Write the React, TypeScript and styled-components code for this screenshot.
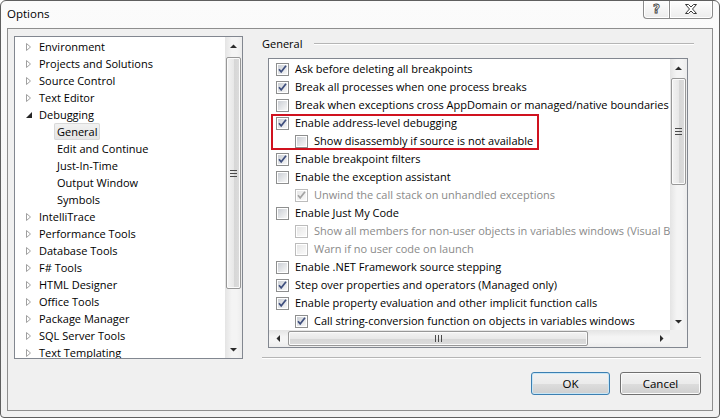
import React from 'react';
import styled, { createGlobalStyle } from 'styled-components';

const Global = createGlobalStyle`
  html, body { margin: 0; padding: 0; background: #ffffff; }
  body { font-family: "Open Sans", "Noto Sans CJK KR", sans-serif; font-size: 11px; color: #000; }
  * { box-sizing: border-box; }
`;

const Window = styled.div`
  width: 720px;
  height: 418px;
  border: 1px solid #5f5f5f;
  border-radius: 6px 6px 4px 4px;
  background: linear-gradient(#fbfbfb, #f1f1f1);
  display: flex;
  flex-direction: column;
  padding: 0 6px 6px 6px;
  overflow: hidden;
`;

const TitleBar = styled.div`
  height: 27px;
  display: flex;
  align-items: flex-start;
  justify-content: space-between;
`;

const Title = styled.span`
  margin-top: 5px;
  font-size: 11.5px;
  line-height: 16px;
  color: #000;
`;

const CaptionButtons = styled.div`
  display: flex;
  margin-top: -1px;
`;

const CaptionButton = styled.div<{ $wide?: boolean; $left?: boolean }>`
  width: ${p => (p.$wide ? 44 : 26)}px;
  height: 19px;
  border: 1px solid #8b8b8b;
  border-top: none;
  ${p => (p.$left ? 'border-right: none; border-radius: 0 0 0 4px;' : 'border-radius: 0 0 4px 0;')}
  background: linear-gradient(#ffffff, #ececec);
  box-shadow: inset 0 0 0 1px #ffffff;
  display: flex;
  align-items: center;
  justify-content: center;
`;

const HelpGlyph = styled.span`
  font-family: "DejaVu Sans", sans-serif;
  font-weight: bold;
  font-size: 12px;
  line-height: 12px;
  color: #fff;
  -webkit-text-stroke: 0.8px #3a3a3a;
`;

const Client = styled.div`
  flex: 1;
  border: 1px solid #8e8e8e;
  background: #f0f0f0;
  padding: 7px 11px 0 6px;
  display: flex;
  flex-direction: column;
`;

const TopArea = styled.div`
  display: flex;
  height: 323px;
`;

const TreeBox = styled.div`
  width: 229px;
  height: 323px;
  border: 1px solid #828790;
  background: #fff;
  display: flex;
`;

const TreeItems = styled.div`
  flex: 1;
  padding-top: 1px;
  overflow: hidden;
`;

const TreeRow = styled.div<{ $level: number }>`
  height: 17px;
  display: flex;
  align-items: center;
  padding-left: ${p => 11 + p.$level * 18}px;
  white-space: nowrap;
`;

const Expander = styled.span`
  width: 13px;
  display: flex;
  align-items: center;
`;

const TreeLabel = styled.span<{ $selected?: boolean }>`
  line-height: 17px;
  padding: 0 3px;
  margin-left: -3px;
  border-radius: 2px;
  ${p =>
    p.$selected
      ? 'background: linear-gradient(#f2f2f2, #e4e4e4); box-shadow: inset 0 0 0 1px #d9d9d9;'
      : ''}
`;

const VScroll = styled.div`
  width: 17px;
  display: flex;
  flex-direction: column;
  background: linear-gradient(to right, #e4e4e4, #f4f4f4 40%, #f4f4f4 70%, #ececec);
`;

const HScroll = styled.div`
  height: 17px;
  display: flex;
  background: linear-gradient(#e4e4e4, #f4f4f4 40%, #f4f4f4 70%, #ececec);
`;

const ArrowBox = styled.div`
  width: 17px;
  height: 17px;
  flex: none;
  display: flex;
  align-items: center;
  justify-content: center;
`;

const Track = styled.div<{ $horizontal?: boolean }>`
  flex: 1;
  display: flex;
  flex-direction: ${p => (p.$horizontal ? 'row' : 'column')};
`;

const Thumb = styled.div<{ $horizontal?: boolean }>`
  flex: none;
  ${p => (p.$horizontal ? 'margin: 1px 0; height: 15px;' : 'margin: 0 1px; width: 15px;')}
  border: 1px solid #979797;
  border-radius: 2px;
  background: ${p =>
    p.$horizontal
      ? 'linear-gradient(#f3f3f3, #e8e8e8 50%, #d6d6d6 51%, #dcdcdc)'
      : 'linear-gradient(to right, #f3f3f3, #e8e8e8 50%, #d6d6d6 51%, #dcdcdc)'};
  box-shadow: inset 0 0 0 1px #fbfbfb;
  display: flex;
  align-items: center;
  justify-content: center;
`;

const Corner = styled.div`
  width: 17px;
  height: 17px;
  background: #f0f0f0;
`;

const RightPane = styled.div`
  flex: 1;
  margin-left: 19px;
  display: flex;
  flex-direction: column;
`;

const GroupHeader = styled.div`
  height: 16px;
  display: flex;
  align-items: center;
`;

const GroupTitle = styled.span`
  line-height: 16px;
`;

const EtchedLine = styled.div`
  flex: 1;
  height: 2px;
  border-top: 1px solid #b5b5b5;
  border-bottom: 1px solid #ffffff;
`;

const HeaderRule = styled(EtchedLine)`
  margin: 0 7px 0 12px;
`;

const ListBox = styled.div`
  margin: 6px 0 0 6px;
  width: 420px;
  height: 290px;
  border: 1px solid #828790;
  background: #fff;
  display: grid;
  grid-template-columns: 1fr 17px;
  grid-template-rows: 1fr 17px;
`;

const ListItems = styled.div`
  padding-top: 1px;
  overflow: hidden;
`;

const CheckRow = styled.div<{ $indent: number; $shift?: number }>`
  height: 18px;
  display: flex;
  align-items: center;
  gap: 6px;
  padding-left: ${p => 7 + p.$indent * 19 - (p.$shift || 0)}px;
  white-space: nowrap;
`;

const CheckText = styled.span<{ $disabled?: boolean }>`
  color: ${p => (p.$disabled ? '#8a8a8a' : '#000')};
  line-height: 18px;
`;

const Highlight = styled.div`
  margin-left: 2px;
  width: 268px;
  outline: 2px solid #d0121f;
  outline-offset: -2px;
`;

const Separator = styled(EtchedLine)`
  flex: none;
  margin-top: 9px;
`;

const ButtonRow = styled.div`
  display: flex;
  justify-content: flex-end;
  gap: 10px;
  margin-top: 13px;
`;

const Button = styled.button<{ $default?: boolean; $w: number }>`
  width: ${p => p.$w}px;
  height: 23px;
  font-family: inherit;
  font-size: 11.5px;
  color: #000;
  border: 1px solid ${p => (p.$default ? '#3c7fb1' : '#707070')};
  border-radius: 3px;
  background: linear-gradient(#f2f2f2, #ebebeb 50%, #dddddd 51%, #cfcfcf);
  box-shadow: inset 0 0 0 1px ${p => (p.$default ? '#c8e6f6' : '#fbfbfb')};
  padding: 0;
`;

const Triangle = ({ open }: { open?: boolean }) =>
  open ? (
    <svg width="6" height="6" viewBox="0 0 6 6">
      <path d="M6 0 L6 6 L0 6 Z" fill="#262626" />
    </svg>
  ) : (
    <svg width="5" height="8" viewBox="0 0 5 8">
      <path d="M0.5 0.5 L4.5 4 L0.5 7.5 Z" fill="#fff" stroke="#a0a0a0" strokeWidth="1" />
    </svg>
  );

const Arrow = ({ dir }: { dir: 'up' | 'down' | 'left' | 'right' }) => {
  const d = {
    up: 'M0 4 L3.5 0.5 L7 4 Z',
    down: 'M0 0 L7 0 L3.5 3.5 Z',
    left: 'M4 0 L4 7 L0.5 3.5 Z',
    right: 'M0 0 L0 7 L3.5 3.5 Z',
  }[dir];
  const vertical = dir === 'up' || dir === 'down';
  return (
    <svg width={vertical ? 7 : 4} height={vertical ? 4 : 7} viewBox={vertical ? '0 0 7 4' : '0 0 4 7'}>
      <path d={d} fill="#2b2b2b" />
    </svg>
  );
};

const Grip = ({ horizontal }: { horizontal?: boolean }) =>
  horizontal ? (
    <svg width="7" height="7" viewBox="0 0 7 7">
      <path d="M0.5 0 V7 M3.5 0 V7 M6.5 0 V7" stroke="#4a4a4a" strokeWidth="1" />
    </svg>
  ) : (
    <svg width="7" height="7" viewBox="0 0 7 7">
      <path d="M0 0.5 H7 M0 3.5 H7 M0 6.5 H7" stroke="#4a4a4a" strokeWidth="1" />
    </svg>
  );

const CheckBox = ({ checked, disabled }: { checked?: boolean; disabled?: boolean }) => (
  <svg width="13" height="13" viewBox="0 0 13 13" style={{ flex: 'none' }}>
    <defs>
      <linearGradient id="cbg" x1="0" y1="0" x2="1" y2="1">
        <stop offset="0" stopColor="#cbcfd5" />
        <stop offset="1" stopColor="#f7f7f7" />
      </linearGradient>
      <linearGradient id="cbd" x1="0" y1="0" x2="1" y2="1">
        <stop offset="0" stopColor="#e6e6e6" />
        <stop offset="1" stopColor="#fafafa" />
      </linearGradient>
    </defs>
    <rect x="0.5" y="0.5" width="12" height="12" fill="#fff" stroke={disabled ? '#bcbcbc' : '#8e8f8f'} />
    <rect x="2" y="2" width="9" height="9" fill={disabled ? 'url(#cbd)' : 'url(#cbg)'} />
    {checked && (
      <path
        d="M3 6.2 L5.2 8.8 L10 2.8"
        fill="none"
        stroke={disabled ? '#a3a3a3' : '#3f4f7e'}
        strokeWidth="1.7"
      />
    )}
  </svg>
);

const CloseGlyph = () => (
  <svg width="12" height="10" viewBox="0 0 12 10">
    <path
      d="M0.5 0.5 H3.5 L6 3 L8.5 0.5 H11.5 L7.5 5 L11.5 9.5 H8.5 L6 7 L3.5 9.5 H0.5 L4.5 5 Z"
      fill="#fff"
      stroke="#3a3a3a"
      strokeWidth="1"
      strokeLinejoin="round"
    />
  </svg>
);

type TreeItem = { label: string; level: number; expander?: 'open' | 'closed'; selected?: boolean };

const treeItems: TreeItem[] = [
  { label: 'Environment', level: 0, expander: 'closed' },
  { label: 'Projects and Solutions', level: 0, expander: 'closed' },
  { label: 'Source Control', level: 0, expander: 'closed' },
  { label: 'Text Editor', level: 0, expander: 'closed' },
  { label: 'Debugging', level: 0, expander: 'open' },
  { label: 'General', level: 1, selected: true },
  { label: 'Edit and Continue', level: 1 },
  { label: 'Just-In-Time', level: 1 },
  { label: 'Output Window', level: 1 },
  { label: 'Symbols', level: 1 },
  { label: 'IntelliTrace', level: 0, expander: 'closed' },
  { label: 'Performance Tools', level: 0, expander: 'closed' },
  { label: 'Database Tools', level: 0, expander: 'closed' },
  { label: 'F# Tools', level: 0, expander: 'closed' },
  { label: 'HTML Designer', level: 0, expander: 'closed' },
  { label: 'Office Tools', level: 0, expander: 'closed' },
  { label: 'Package Manager', level: 0, expander: 'closed' },
  { label: 'SQL Server Tools', level: 0, expander: 'closed' },
  { label: 'Text Templating', level: 0, expander: 'closed' },
];

type Opt = { label: string; indent: number; checked?: boolean; disabled?: boolean };

const before: Opt[] = [
  { label: 'Ask before deleting all breakpoints', indent: 0, checked: true },
  { label: 'Break all processes when one process breaks', indent: 0, checked: true },
  { label: 'Break when exceptions cross AppDomain or managed/native boundaries', indent: 0 },
];

const highlighted: Opt[] = [
  { label: 'Enable address-level debugging', indent: 0, checked: true },
  { label: 'Show disassembly if source is not available', indent: 1 },
];

const after: Opt[] = [
  { label: 'Enable breakpoint filters', indent: 0, checked: true },
  { label: 'Enable the exception assistant', indent: 0 },
  { label: 'Unwind the call stack on unhandled exceptions', indent: 1, checked: true, disabled: true },
  { label: 'Enable Just My Code', indent: 0 },
  { label: 'Show all members for non-user objects in variables windows (Visual Basic only)', indent: 1, disabled: true },
  { label: 'Warn if no user code on launch', indent: 1, disabled: true },
  { label: 'Enable .NET Framework source stepping', indent: 0 },
  { label: 'Step over properties and operators (Managed only)', indent: 0, checked: true },
  { label: 'Enable property evaluation and other implicit function calls', indent: 0, checked: true },
  { label: 'Call string-conversion function on objects in variables windows', indent: 1, checked: true },
];

const OptRow = ({ o, shift }: { o: Opt; shift?: number }) => (
  <CheckRow $indent={o.indent} $shift={shift}>
    <CheckBox checked={o.checked} disabled={o.disabled} />
    <CheckText $disabled={o.disabled}>{o.label}</CheckText>
  </CheckRow>
);

export default function App() {
  return (
    <>
      <Global />
      <Window>
        <TitleBar>
          <Title>Options</Title>
          <CaptionButtons>
            <CaptionButton $left>
              <HelpGlyph>?</HelpGlyph>
            </CaptionButton>
            <CaptionButton $wide>
              <CloseGlyph />
            </CaptionButton>
          </CaptionButtons>
        </TitleBar>
        <Client>
          <TopArea>
            <TreeBox>
              <TreeItems>
                {treeItems.map(t => (
                  <TreeRow key={t.label} $level={t.level}>
                    <Expander>{t.expander && <Triangle open={t.expander === 'open'} />}</Expander>
                    <TreeLabel $selected={t.selected}>{t.label}</TreeLabel>
                  </TreeRow>
                ))}
              </TreeItems>
              <VScroll>
                <ArrowBox>
                  <Arrow dir="up" />
                </ArrowBox>
                <Track>
                  <Thumb style={{ marginTop: 3, height: 232 }}>
                    <Grip />
                  </Thumb>
                </Track>
                <ArrowBox>
                  <Arrow dir="down" />
                </ArrowBox>
              </VScroll>
            </TreeBox>
            <RightPane>
              <GroupHeader>
                <GroupTitle>General</GroupTitle>
                <HeaderRule />
              </GroupHeader>
              <ListBox>
                <ListItems>
                  {before.map(o => (
                    <OptRow key={o.label} o={o} />
                  ))}
                  <Highlight>
                    {highlighted.map(o => (
                      <OptRow key={o.label} o={o} shift={2} />
                    ))}
                  </Highlight>
                  {after.map(o => (
                    <OptRow key={o.label} o={o} />
                  ))}
                </ListItems>
                <VScroll>
                  <ArrowBox>
                    <Arrow dir="up" />
                  </ArrowBox>
                  <Track>
                    <Thumb style={{ marginTop: 2, height: 107 }}>
                      <Grip />
                    </Thumb>
                  </Track>
                  <ArrowBox>
                    <Arrow dir="down" />
                  </ArrowBox>
                </VScroll>
                <HScroll>
                  <ArrowBox>
                    <Arrow dir="left" />
                  </ArrowBox>
                  <Track $horizontal>
                    <Thumb $horizontal style={{ marginLeft: 2, width: 300 }}>
                      <Grip horizontal />
                    </Thumb>
                  </Track>
                  <ArrowBox>
                    <Arrow dir="right" />
                  </ArrowBox>
                </HScroll>
                <Corner />
              </ListBox>
              <Separator />
            </RightPane>
          </TopArea>
          <ButtonRow>
            <Button $default $w={79}>OK</Button>
            <Button $w={81}>Cancel</Button>
          </ButtonRow>
        </Client>
      </Window>
    </>
  );
}
